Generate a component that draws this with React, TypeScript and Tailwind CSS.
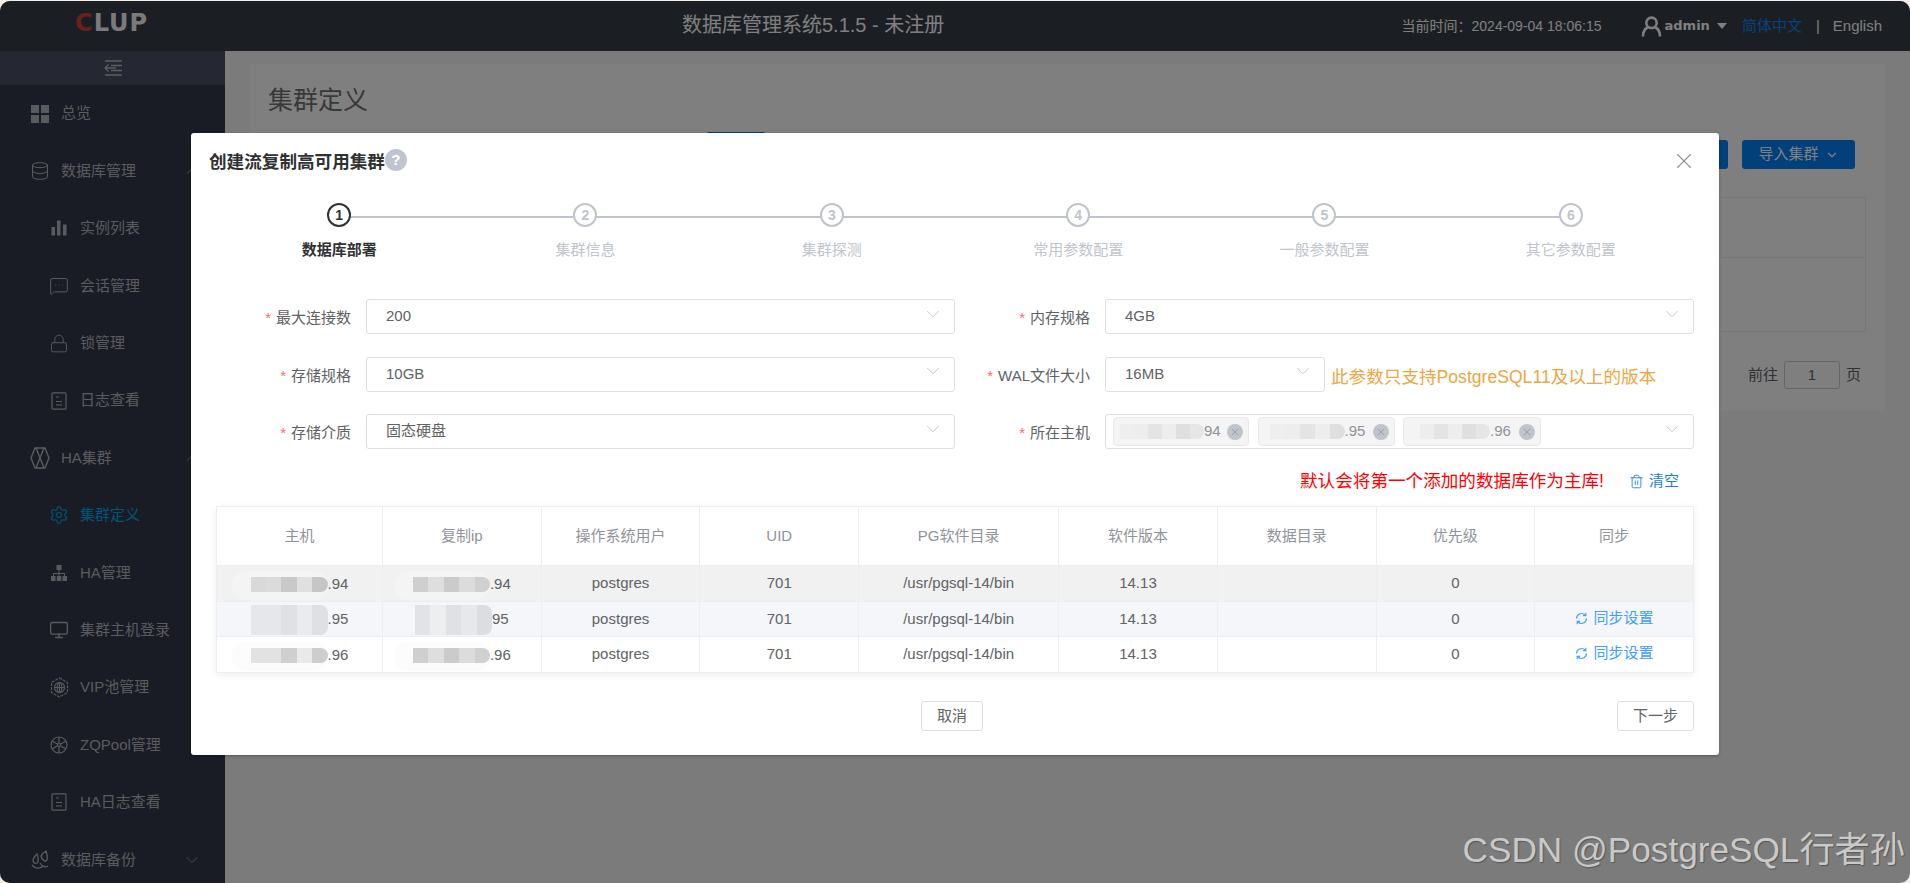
import React from 'react';
import {ChevronDown, ChevronUp, Database, Lock, Monitor, MessageSquareMore, Settings, Trash2, X} from 'lucide-react';

const GridIcon = () => (
    <svg width="18" height="18" viewBox="0 0 18 18" fill="currentColor">
        <rect x="0" y="0" width="8" height="8"/><rect x="10" y="0" width="8" height="8"/>
        <rect x="0" y="10" width="8" height="8"/><rect x="10" y="10" width="8" height="8"/>
    </svg>
);
const BarsIcon = () => (
    <svg width="16" height="16" viewBox="0 0 16 16" fill="currentColor">
        <rect x="0.5" y="7" width="3.5" height="8.5"/><rect x="6" y="0.5" width="3.5" height="15"/><rect x="12" y="4.5" width="3.5" height="11"/>
    </svg>
);
const DocIcon = () => (
    <svg width="16" height="18" viewBox="0 0 16 18" fill="none" stroke="currentColor" strokeWidth="1.2">
        <rect x="1" y="0.8" width="14" height="16.4" rx="1"/><path d="M5 5h3M5 9.5h6M5 13h6"/>
    </svg>
);
const ClusterIcon = () => (
    <svg width="20" height="22" viewBox="0 0 20 22" fill="none" stroke="currentColor" strokeWidth="1.4">
        <path d="M5 1h10l4 10-4 10H5L1 11z"/><path d="M6 1l8 20M14 1L6 21"/>
    </svg>
);
const TreeIcon = () => (
    <svg width="18" height="18" viewBox="0 0 18 18" fill="currentColor">
        <rect x="6.5" y="1" width="5" height="5"/><rect x="1" y="12" width="4.5" height="5"/><rect x="6.8" y="12" width="4.5" height="5"/><rect x="12.5" y="12" width="4.5" height="5"/>
        <path d="M8.5 6h1v3h5.5v3h-1v-2h-4.500v2h-1v-2H4v2H3V9h5.500z"/>
    </svg>
);
const GlobeHexIcon = () => (
    <svg width="19" height="21" viewBox="0 0 19 21" fill="none" stroke="currentColor" strokeWidth="1.1">
        <path d="M9.500 1l8 4.500v10l-8 4.500-8-4.500v-10z" strokeDasharray="3 1"/>
        <circle cx="9.500" cy="10.500" r="5"/><path d="M4.500 10.500h10M9.500 5.500v10"/><ellipse cx="9.500" cy="10.500" rx="2.300" ry="5"/>
    </svg>
);
const WheelIcon = () => (
    <svg width="18" height="18" viewBox="0 0 18 18" fill="none" stroke="currentColor" strokeWidth="1.200">
        <circle cx="9" cy="9" r="8"/><circle cx="9" cy="9" r="1.500"/><path d="M9 1v6.500M9 10.500V17M2 5l5.700 3.200M10.300 9.800L16 13M16 5l-5.700 3.200M7.700 9.800L2 13"/>
    </svg>
);
const BackupIcon = () => (
    <svg width="19" height="20" viewBox="0 0 19 20" fill="none" stroke="currentColor" strokeWidth="1.300">
        <path d="M2 11c0-3 2-5 4-7 1 3 2 5 1 8-1 2-4 2-5-1z"/><path d="M10 6c1-2 3-4 5-5 1 3 2 6 1 9-1 2-5 1-6-4z"/><path d="M1 15c3 4 8 4 11 1M9 13c2 3 5 5 8 3"/>
    </svg>
);
const FoldIcon = () => (
    <svg width="18" height="16" viewBox="0 0 18 16" fill="none" stroke="currentColor" strokeWidth="1.300">
        <path d="M1 1h17M7 5.500h11M7 10.500h11M1 15h17M1 8h11"/><path d="M4.500 4.500L1 8l3.500 3.500"/>
    </svg>
);
const UserIcon = () => (
    <svg width="21" height="21" viewBox="0 0 21 21" fill="none" stroke="currentColor" strokeWidth="2.600">
        <circle cx="10.500" cy="6.800" r="5.200"/><path d="M2 20.500c0-5 2.500-8 4.500-9M19 20.500c0-5-2.500-8-4.500-9"/>
    </svg>
);
const SyncIcon = () => (
    <svg width="13" height="13" viewBox="0 0 13 13" fill="none" stroke="currentColor" strokeWidth="1.200">
        <path d="M1.500 6.500a5 5 0 0 1 8.500-3.500M11.500 6.500a5 5 0 0 1-8.500 3.500"/>
        <path d="M10.800 0.800v2.800H8M2.200 12.200V9.400H5"/>
    </svg>
);

type MenuItem = {label: string; icon: React.ReactNode; sub?: boolean; active?: boolean; arrow?: 'up' | 'down'};

const menu: MenuItem[] = [
    {label: '总览', icon: <GridIcon/>},
    {label: '数据库管理', icon: <Database size={20} strokeWidth={1.2}/>, arrow: 'up'},
    {label: '实例列表', icon: <BarsIcon/>, sub: true},
    {label: '会话管理', icon: <MessageSquareMore size={20} strokeWidth={1.2}/>, sub: true},
    {label: '锁管理', icon: <Lock size={21} strokeWidth={1.1}/>, sub: true},
    {label: '日志查看', icon: <DocIcon/>, sub: true},
    {label: 'HA集群', icon: <ClusterIcon/>, arrow: 'up'},
    {label: '集群定义', icon: <Settings size={22} strokeWidth={1.4}/>, sub: true, active: true},
    {label: 'HA管理', icon: <TreeIcon/>, sub: true},
    {label: '集群主机登录', icon: <Monitor size={20} strokeWidth={1.6}/>, sub: true},
    {label: 'VIP池管理', icon: <GlobeHexIcon/>, sub: true},
    {label: 'ZQPool管理', icon: <WheelIcon/>, sub: true},
    {label: 'HA日志查看', icon: <DocIcon/>, sub: true},
    {label: '数据库备份', icon: <BackupIcon/>, arrow: 'down'},
];

const steps = ['数据库部署', '集群信息', '集群探测', '常用参数配置', '一般参数配置', '其它参数配置'];
const columns = ['主机', '复制ip', '操作系统用户', 'UID', 'PG软件目录', '软件版本', '数据目录', '优先级', '同步'];

const dark = ['#d9d9d9', '#dbdbdb', '#c9c9c9', '#e0e0e0', '#c6c6c6'];
const dark2 = ['#cfcfcf', '#dedede', '#cbcbcb', '#dcdcdc', '#d0d0d0'];
const pale = ['#e6e7ea', '#e6e7ea', '#dfe1e4', '#eaebee', '#dfe0e4'];
const pale2 = ['#e2e3e6', '#eceef0', '#e0e1e4', '#e7e8eb', '#dcdde1'];
const light = ['#e2e2e2', '#e2e2e2', '#cfcfcf', '#e9e9e9', '#cdcdcd'];
const tagTone = ['#eeeeee', '#ededed', '#e4e4e4', '#ededed', '#dfdfdf', '#e6e6e6'];

type MosaicProps = {tones: string[]; tall?: boolean; block?: number; smudge?: string};

const Mosaic: React.FC<MosaicProps> = ({tones, tall, block = 15.4, smudge}) => (
    <span className="relative">
        {/* pale halo that the blur tool left round the number */}
        {smudge && <span className="absolute -bottom-[8px] -left-[19px] -top-[6px] right-0 rounded-[14px]" style={{backgroundColor: smudge}}/>}
        <span className={`relative flex overflow-hidden rounded-r-[8px] ${tall ? 'h-[30px]' : 'h-[15px]'}`}>
            {tones.map((tone, i) => (
                <span key={i} className="h-full" style={{backgroundColor: tone, width: block}}/>
            ))}
        </span>
    </span>
);

const IpCell: React.FC<MosaicProps & {end: string}> = ({end, ...mosaic}) => (
    <span className="inline-flex h-[22px] items-center align-middle">
        <Mosaic {...mosaic}/>
        <span className="relative">{end}</span>
    </span>
);

const Label: React.FC<{text: string}> = ({text}) => (
    <label className="w-[135px] shrink-0 pt-[7px] text-right text-[15px] leading-[24px] text-[#606266]">
        <span className="mr-[5px] text-[#f56c6c]">*</span>{text}
    </label>
);

const Select: React.FC<{value?: string; className?: string; children?: React.ReactNode}> = ({value, className = 'w-[589px]', children}) => (
    <div className={`${className} flex h-[35px] shrink-0 items-center rounded-[3px] border border-[#dcdfe6] pr-[10px] text-[15px] text-[#606266] ${value ? 'pl-[19px]' : 'pl-[7px]'}`}>
        {value}
        {children}
        <ChevronDown size={22} strokeWidth={0.9} className="ml-auto -translate-y-[3px] text-[#b8bcc5]"/>
    </div>
);

const HostTag: React.FC<{tones: string[]; end: string; width: string; pad: string; block: number}> = ({tones, end, width, pad, block}) => (
    <span className={`flex h-[29px] items-center rounded-[4px] border border-[#e9e9eb] bg-[#f4f4f5] text-[15px] text-[#909399] ${width} ${pad}`}>
        <Mosaic tones={tones} block={block}/>
        <span>{end}</span>
        <span className="ml-auto mr-[5px] flex h-[16px] w-[16px] items-center justify-center rounded-full bg-[#c0c4cc] text-[#8f939c]">
            <X size={12} strokeWidth={1.5}/>
        </span>
    </span>
);

const Sidebar = () => (
    <aside className="w-[225px] shrink-0 overflow-hidden bg-[#323848]">
        <div className="flex h-[34px] items-center justify-center bg-[#4a5066] text-[#b9bcc4]">
            <FoldIcon/>
        </div>
        {menu.map((item) => (
            <div
                key={item.label}
                className={`flex h-[57.4px] items-center text-[15px] ${item.active ? 'text-[#00a8f0]' : 'text-[#b5b7bd]'} ${item.sub ? 'pl-[49px]' : 'pl-[30px]'}`}
            >
                <span className="mr-[11px] flex h-[22px] w-[20px] shrink-0 items-center justify-center">{item.icon}</span>
                {item.label}
                {item.arrow === 'up' && <ChevronUp size={20} strokeWidth={0.9} className="ml-auto mr-[23px]"/>}
                {item.arrow === 'down' && <ChevronDown size={20} strokeWidth={0.9} className="ml-auto mr-[23px]"/>}
            </div>
        ))}
    </aside>
);

const Background = () => (
    <main className="flex-1 bg-[#f6f6f6] pl-[25px] pr-[25px] pt-[13px]">
        <section className="h-[347px] bg-white pl-[18px] pr-[19px] pt-[20px]">
            <h1 className="h-[33px] text-[25px] leading-[33px] text-[#707070]">集群定义</h1>
            <div className="mt-[15px] flex items-start">
                <button className="ml-[438px] h-[30px] w-[60px] rounded-[3px] bg-[#0a84f8]"/>
                <button className="ml-auto mt-[8px] h-[29px] w-[80px] rounded-[3px] bg-[#0480f8]"/>
                <button className="ml-[14px] mr-[11px] mt-[8px] flex h-[29px] w-[113px] items-center justify-center gap-[6px] rounded-[3px] bg-[#0480f8] text-[15px] text-white">
                    导入集群 <ChevronDown size={14}/>
                </button>
            </div>
            <div className="mt-[28px] ml-[2px] h-[135px] border border-[#ebeef5]">
                <div className="h-[60px] border-b border-[#ebeef5]"/>
            </div>
            <div className="mt-[29px] flex h-[28px] items-center justify-end pr-[5px] text-[15px] text-[#606266]">
                前往
                <span className="mx-[6px] flex h-[28px] w-[56px] items-center justify-center rounded-[3px] border border-[#c8ccd4]">1</span>
                页
            </div>
        </section>
    </main>
);

const Steps = () => (
    <div className="mt-[12px] grid grid-cols-6">
        {steps.map((step, i) => (
            <div key={step} className="relative flex flex-col items-center">
                {i < steps.length - 1 && <span className="absolute left-1/2 top-[13px] h-[2px] w-full bg-[#c0c4d0]"/>}
                <span className={`relative z-10 flex h-[24px] w-[24px] items-center justify-center rounded-full border-2 bg-white text-[14px] font-bold ${i === 0 ? 'border-[#303133] text-[#303133]' : 'border-[#c0c4cc] text-[#c0c4cc]'}`}>
                    {i + 1}
                </span>
                <span className={`mt-[13px] text-[15px] leading-[20px] ${i === 0 ? 'font-bold text-[#303133]' : 'text-[#c0c4cc]'}`}>{step}</span>
            </div>
        ))}
    </div>
);

const SyncLink = () => (
    <span className="inline-flex items-center gap-[6px]"><SyncIcon/>同步设置</span>
);

const HostTable = () => (
    <div className="shadow-[0_2px_8px_rgba(0,0,0,0.07)]">
        <table className="w-full table-fixed border-collapse text-center text-[15px] text-[#606266]">
            <thead>
                <tr className="h-[59px]">
                    {columns.map((col, i) => (
                        <th key={col} className={`border border-[#ebeef5] font-normal text-[#909399] ${i === 0 ? 'w-[166px]' : i === 4 ? 'w-[200px]' : ''}`}>{col}</th>
                    ))}
                </tr>
            </thead>
            <tbody>
                <tr className="h-[36px] bg-[#f1f1f1]">
                    <td className="border border-[#ebeef5]"><IpCell tones={dark} smudge="#f4f4f4" end=".94"/></td>
                    <td className="border border-[#ebeef5]"><IpCell tones={dark2} smudge="#f4f4f4" end=".94"/></td>
                    <td className="border border-[#ebeef5]">postgres</td>
                    <td className="border border-[#ebeef5]">701</td>
                    <td className="border border-[#ebeef5]">/usr/pgsql-14/bin</td>
                    <td className="border border-[#ebeef5]">14.13</td>
                    <td className="border border-[#ebeef5]"/>
                    <td className="border border-[#ebeef5]">0</td>
                    <td className="border border-[#ebeef5]"/>
                </tr>
                <tr className="h-[35px] bg-[#f4f6fa]">
                    <td className="border border-[#ebeef5]"><IpCell tones={pale} tall end=".95"/></td>
                    <td className="border border-[#ebeef5]"><IpCell tones={pale2} tall end="95"/></td>
                    <td className="border border-[#ebeef5]">postgres</td>
                    <td className="border border-[#ebeef5]">701</td>
                    <td className="border border-[#ebeef5]">/usr/pgsql-14/bin</td>
                    <td className="border border-[#ebeef5]">14.13</td>
                    <td className="border border-[#ebeef5]"/>
                    <td className="border border-[#ebeef5]">0</td>
                    <td className="border border-[#ebeef5] text-[#409eff]"><SyncLink/></td>
                </tr>
                <tr className="h-[36px]">
                    <td className="border border-[#ebeef5]"><IpCell tones={light} smudge="#fcfcfc" end=".96"/></td>
                    <td className="border border-[#ebeef5]"><IpCell tones={dark2} smudge="#fcfcfc" end=".96"/></td>
                    <td className="border border-[#ebeef5]">postgres</td>
                    <td className="border border-[#ebeef5]">701</td>
                    <td className="border border-[#ebeef5]">/usr/pgsql-14/bin</td>
                    <td className="border border-[#ebeef5]">14.13</td>
                    <td className="border border-[#ebeef5]"/>
                    <td className="border border-[#ebeef5]">0</td>
                    <td className="border border-[#ebeef5] text-[#409eff]"><SyncLink/></td>
                </tr>
            </tbody>
        </table>
    </div>
);

const Modal = () => (
    <div className="absolute left-[191px] top-[132px] z-30 h-[622px] w-[1528px] rounded-[3px] bg-white shadow-[0_1px_3px_rgba(0,0,0,0.3)]">
        <div className="flex h-[58px] items-center pl-[18px]">
            <span className="text-[17.6px] font-bold text-[#303133]">创建流复制高可用集群</span>
            <span className="-mt-[4px] flex h-[22px] w-[22px] items-center justify-center rounded-full bg-[#c0c4d0] text-[15px] font-bold text-white">?</span>
        </div>
        <X size={26} strokeWidth={1} className="absolute right-[22px] top-[15px] text-[#909399]"/>
        <div className="px-[25px]">
            <Steps/>
            <div className="mt-[39px] grid grid-cols-2 gap-y-[22.5px]">
                <div className="flex gap-[15px]"><Label text="最大连接数"/><Select value="200"/></div>
                <div className="flex gap-[15px]"><Label text="内存规格"/><Select value="4GB"/></div>
                <div className="flex gap-[15px]"><Label text="存储规格"/><Select value="10GB"/></div>
                <div className="flex gap-[15px]">
                    <Label text="WAL文件大小"/>
                    <Select value="16MB" className="w-[220px]"/>
                    <span className="-ml-[9px] pt-[7px] text-[17.6px] leading-[26px] text-[#eea63f]">此参数只支持PostgreSQL11及以上的版本</span>
                </div>
                <div className="flex gap-[15px]"><Label text="存储介质"/><Select value="固态硬盘"/></div>
                <div className="flex gap-[15px]">
                    <Label text="所在主机"/>
                    <Select>
                        <div className="flex gap-[8.500px]">
                            <HostTag tones={tagTone} block={14} end="94" width="w-[136px]" pad="pl-[6px]"/>
                            <HostTag tones={tagTone.slice(0, 5)} block={15} end=".95" width="w-[137px]" pad="pl-[11px]"/>
                            <HostTag tones={tagTone.slice(1, 6)} block={14} end=".96" width="w-[138px]" pad="pl-[16px]"/>
                        </div>
                    </Select>
                </div>
            </div>
            <div className="mt-[17px] flex h-[30px] items-center justify-end pr-[15px]">
                <span className="text-[17.6px] text-[#ff0000]">默认会将第一个添加的数据库作为主库!</span>
                <span className="ml-[25px] flex items-center gap-[5px] text-[15px] text-[#1b82d2]"><Trash2 size={15} strokeWidth={1.4}/>清空</span>
            </div>
            <div className="mt-[10px]"><HostTable/></div>
            <div className="mt-[28px] flex text-[15px] text-[#606266]">
                <button className="ml-[705px] h-[30px] w-[62px] rounded-[3px] border border-[#dcdfe6]">取消</button>
                <button className="ml-auto h-[30px] w-[77px] rounded-[3px] border border-[#dcdfe6]">下一步</button>
            </div>
        </div>
    </div>
);

const App: React.FC = () => {
    return (
        <div className="h-screen w-screen overflow-hidden bg-[#f4ece8] pt-px font-['Liberation_Sans','Noto_Sans_CJK_SC',sans-serif]">
            <div className="relative flex h-[882px] flex-col overflow-hidden rounded-[10px]">
                <header className="flex h-[50px] shrink-0 items-center bg-[#363c46] text-white">
                    <span className="ml-[75px] -mt-[6px] w-[75px] font-['DejaVu_Sans'] text-[24px] font-bold leading-[24px] tracking-[1px] text-[#f4f4f4]">
                        <span className="text-[#d04040]">C</span>LUP
                    </span>
                    <span className="ml-[532px] -mt-[2px] text-[20px]">数据库管理系统5.1.5 - 未注册</span>
                    <div className="ml-auto flex items-center pr-[28px] text-[15px]">
                        <span className="text-[14px]">当前时间：2024-09-04 18:06:15</span>
                        <span className="ml-[39px]"><UserIcon/></span>
                        <span className="ml-[3px] font-['DejaVu_Sans'] text-[13px] font-bold">admin</span>
                        <span className="ml-[7px] h-0 w-0 border-x-[5px] border-t-[6px] border-x-transparent border-t-white"/>
                        <span className="ml-[15px] text-[#0a84f8]">简体中文</span>
                        <span className="ml-[14px]">|</span>
                        <span className="ml-[13px]">English</span>
                    </div>
                </header>
                <div className="flex min-h-0 flex-1">
                    <Sidebar/>
                    <Background/>
                </div>
                <div className="absolute inset-0 z-20 bg-black/50"/>
                <Modal/>
                <div className="absolute bottom-[13px] right-[5px] z-40 text-[35.2px] leading-[40px] text-[#c9c9c9] [text-shadow:1px_1px_1px_rgba(0,0,0,0.3)]">
                    CSDN @PostgreSQL行者孙
                </div>
            </div>
        </div>
    );
};

export default App;
